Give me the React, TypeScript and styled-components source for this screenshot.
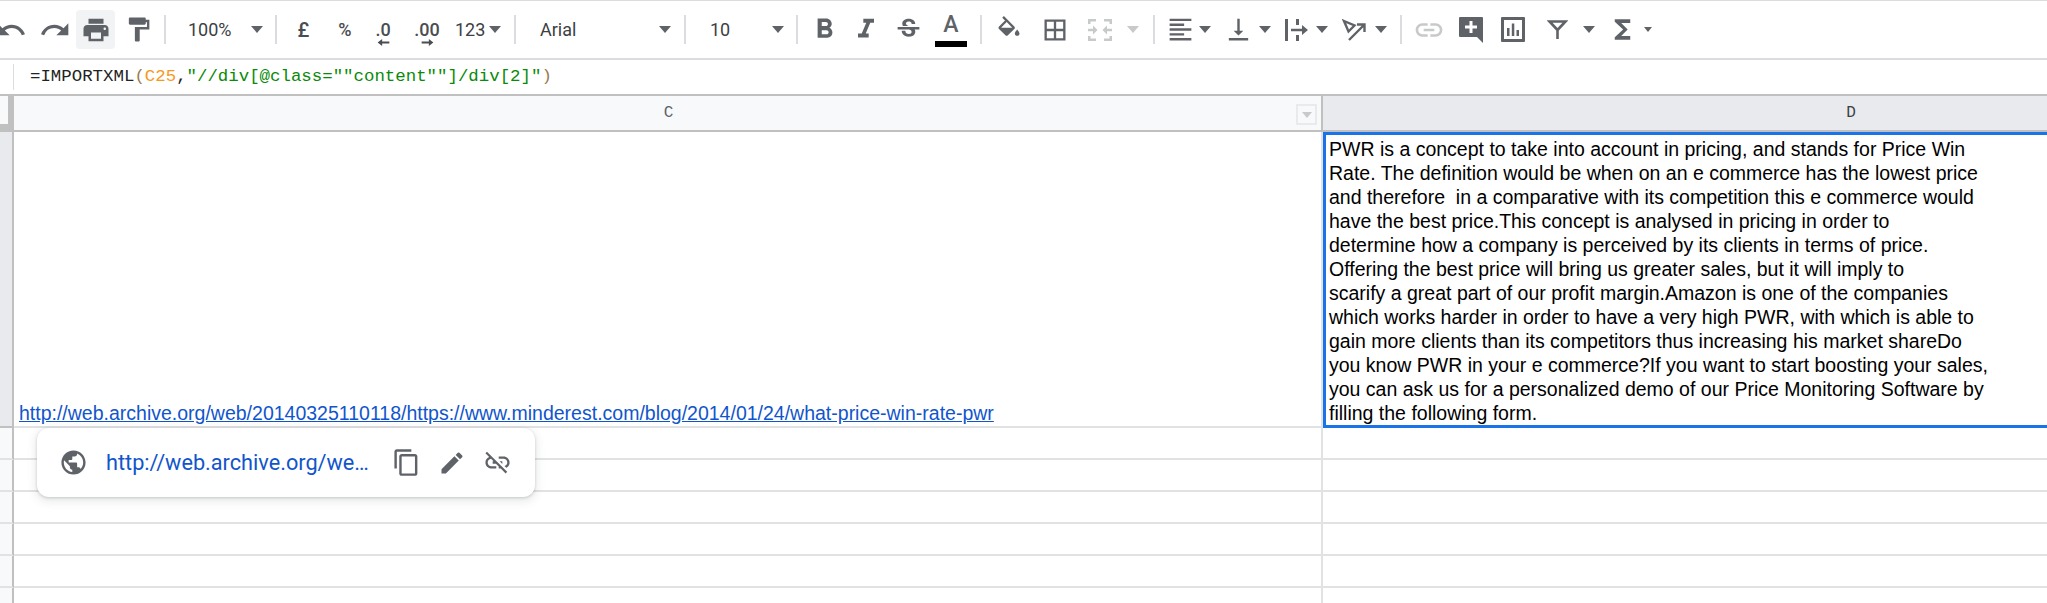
import React from "react"
import styled, { createGlobalStyle } from "styled-components"
import {
  MdUndo,
  MdRedo,
  MdPrint,
  MdFormatPaint,
  MdFormatBold,
  MdFormatItalic,
  MdStrikethroughS,
  MdBorderAll,
  MdFormatAlignLeft,
  MdVerticalAlignBottom,
  MdLink,
  MdFunctions,
  MdPublic,
  MdContentCopy,
  MdEdit,
  MdLinkOff,
} from "react-icons/md"

const iconColor = "#5f6368"
const gridLine = "#e1e2e3"
const frozenLine = "#c0c0c0"

const GlobalStyle = createGlobalStyle`
  html, body {
    margin: 0;
    padding: 0;
    height: 603px;
    overflow: hidden;
    background: #fff;
    font-family: "Liberation Sans", Arial, sans-serif;
  }
`

const Page = styled.div`
  position: relative;
  width: 2047px;
  height: 603px;
  overflow: hidden;
`

const Toolbar = styled.div`
  box-sizing: border-box;
  display: flex;
  align-items: center;
  height: 60px;
  width: 2058px;
  margin-left: -11px;
  border-top: 1px solid #dadce0;
  border-bottom: 2px solid #dadce0;
  color: ${iconColor};
`

const Slot = styled.div<{ $w: number; $ml?: number; $hover?: boolean; $muted?: boolean }>`
  flex: none;
  display: flex;
  align-items: center;
  justify-content: center;
  width: ${(p) => p.$w}px;
  height: 39px;
  margin-left: ${(p) => p.$ml ?? 0}px;
  border-radius: 4px;
  background: ${(p) => (p.$hover ? "#f1f3f4" : "transparent")};
  color: ${(p) => (p.$muted ? "#c8c9ca" : iconColor)};
`

const Sep = styled.div<{ $ml?: number }>`
  flex: none;
  width: 2px;
  height: 29px;
  margin-left: ${(p) => p.$ml ?? 0}px;
  background: #dadce0;
`

const Caret = styled.span<{ $size?: number; $muted?: boolean }>`
  display: block;
  width: 0;
  height: 0;
  border-left: ${(p) => p.$size ?? 6}px solid transparent;
  border-right: ${(p) => p.$size ?? 6}px solid transparent;
  border-top: ${(p) => (p.$size ?? 6) + 1}px solid ${(p) => (p.$muted ? "#c8c9ca" : iconColor)};
`

const Select = styled.div<{ $w: number; $pl: number; $pr: number }>`
  flex: none;
  box-sizing: border-box;
  display: flex;
  align-items: center;
  justify-content: space-between;
  width: ${(p) => p.$w}px;
  padding: 0 ${(p) => p.$pr}px 0 ${(p) => p.$pl}px;
  font: 400 18px Roboto, sans-serif;
  color: #3c4043;
`

const TextButton = styled(Slot)<{ $fs: number }>`
  font: 500 ${(p) => p.$fs}px Roboto, sans-serif;
  color: #4a4d51;
`

const DecimalButton = styled(Slot)`
  flex-direction: column;
  font: 500 18px/18px Roboto, sans-serif;
  color: #4a4d51;
  svg {
    margin: -1px 0 -8px;
  }
`

const ColorButton = styled(Slot)`
  flex-direction: column;
  justify-content: flex-start;
  font: 500 23px/26px Roboto, sans-serif;
  padding-top: 2px;
  box-sizing: border-box;
`

const ColorBar = styled.div`
  width: 32px;
  height: 6px;
  margin-top: 3px;
  background: #000;
`

const FormulaBar = styled.div`
  box-sizing: border-box;
  display: flex;
  align-items: center;
  height: 36px;
  padding-left: 13px;
  border-bottom: 2px solid ${frozenLine};
`

const FormulaDivider = styled.div`
  width: 1px;
  height: 26px;
  background: #dadce0;
`

const FormulaText = styled.div`
  margin-left: 16px;
  margin-top: -2px;
  font: 400 17.4px "Liberation Mono", monospace;
  color: #222;
  white-space: pre;
`

const Token = styled.span<{ $kind: "ref" | "str" | "paren" }>`
  color: ${(p) => (p.$kind === "ref" ? "#f7981d" : p.$kind === "str" ? "#0a8a0a" : "#9a7b4f")};
`

const Row = styled.div<{ $h: number }>`
  display: grid;
  grid-template-columns: 14px 1309px 1056px;
  height: ${(p) => p.$h}px;
`

const Corner = styled.div`
  box-sizing: border-box;
  background: #f8f9fa;
  border-right: 6px solid ${frozenLine};
  border-bottom: 8px solid ${frozenLine};
`

const ColHead = styled.div<{ $active?: boolean }>`
  box-sizing: border-box;
  position: relative;
  display: flex;
  align-items: center;
  justify-content: center;
  padding-left: 2px;
  background: ${(p) => (p.$active ? "#e8eaed" : "#f8f9fa")};
  border-right: 2px solid ${frozenLine};
  border-bottom: 2px solid ${frozenLine};
  font: 400 16px "Liberation Mono", monospace;
  color: ${(p) => (p.$active ? "#3c4043" : "#5f6368")};
`

const FilterToggle = styled.div`
  box-sizing: border-box;
  position: absolute;
  top: 8px;
  right: 4px;
  display: flex;
  align-items: center;
  justify-content: center;
  width: 21px;
  height: 21px;
  border: 2px solid #e8eaed;
  background: #f8f9fa;
`

const RowHead = styled.div<{ $active?: boolean }>`
  box-sizing: border-box;
  background: ${(p) => (p.$active ? "#e8eaed" : "#f8f9fa")};
  border-right: 2px solid ${frozenLine};
  border-bottom: 2px solid ${(p) => (p.$active ? frozenLine : gridLine)};
`

const Cell = styled.div`
  box-sizing: border-box;
  display: flex;
  flex-direction: column;
  justify-content: flex-end;
  padding: 0 5px 1px;
  border-right: 2px solid ${gridLine};
  border-bottom: 2px solid ${gridLine};
  font-size: 19.5px;
  line-height: 24px;
  color: #000;
`

const CellLink = styled.a`
  color: #1155cc;
  text-decoration: underline;
  white-space: nowrap;
`

const ActiveCell = styled.div`
  box-sizing: border-box;
  display: flex;
  flex-direction: column;
  justify-content: flex-end;
  padding: 0 3px;
  border: 3px solid #1a73e8;
  font-size: 19.5px;
  line-height: 24px;
  color: #000;
  white-space: pre;
`

const LinkPopup = styled.div`
  box-sizing: border-box;
  position: absolute;
  left: 37px;
  top: 428px;
  display: flex;
  align-items: center;
  width: 498px;
  height: 69px;
  padding-left: 22px;
  background: #fff;
  border-radius: 12px;
  box-shadow: 0 1px 3px rgba(60, 64, 67, 0.22), 0 3px 8px 2px rgba(60, 64, 67, 0.1);
  color: ${iconColor};
`

const PopupUrl = styled.span`
  width: 265px;
  margin: 0 21px 0 18px;
  white-space: nowrap;
  font: 400 21.7px Roboto, sans-serif;
  color: #1155cc;
`

const PopupAction = styled.div`
  display: flex;
  margin-right: 17px;
`

// toolbar glyphs that the icon packs don't have in this shape
const FillIcon = () => (
  <svg width="28" height="28" viewBox="0 0 24 24" fill="currentColor">
    <path d="M16.56 8.94 7.62 0 6.21 1.41l2.38 2.38-5.15 5.15c-.59.59-.59 1.54 0 2.12l5.5 5.5c.29.29.68.44 1.06.44s.77-.15 1.06-.44l5.5-5.5c.59-.58.59-1.53 0-2.12zM5.21 10 10 5.21 14.79 10H5.21zM19 11.5s-2 2.17-2 3.5c0 1.1.9 2 2 2s2-.9 2-2c0-1.33-2-3.5-2-3.5z" />
  </svg>
)

const MergeIcon = () => (
  <svg width="24" height="22" viewBox="0 0 24 22" fill="currentColor">
    <path d="M0 0h8v2.500H2.500V5H0zM16 0h8v5h-2.500V2.500H16zM0 17h2.500v2.500H8V22H0zM21.500 17H24v5h-8v-2.500h5.500zM0 9.700h5V6.500l4.500 4.500L5 15.500v-3.200H0zM24 9.700h-5V6.500L14.500 11l4.500 4.500v-3.200h5z" />
  </svg>
)

const WrapIcon = () => (
  <svg width="24" height="22" viewBox="0 0 24 22" fill="currentColor">
    <path d="M0 0h3v22H0zM11 0h3v6h-3zM11 16h3v6h-3zM6 9.700h11V6l6 5-6 5v-3.700H6z" />
  </svg>
)

const RotateIcon = () => (
  <svg width="24" height="22" viewBox="0 0 24 22" fill="none" stroke="currentColor" strokeWidth="2.4">
    <path d="M2 2l10.500 4.500L6.500 12.500zM7 21L22 6M15 5.500h7.500V13" />
  </svg>
)

const CommentIcon = () => (
  <svg width="24" height="26" viewBox="0 0 24 26" fill="currentColor">
    <path
      fillRule="evenodd"
      d="M1 0h22a1 1 0 0 1 1 1v25l-6-6H1a1 1 0 0 1-1-1V1a1 1 0 0 1 1-1zM10.500 4v4.500H6v3h4.500V16h3v-4.500H18v-3h-4.500V4z"
    />
  </svg>
)

const ChartIcon = () => (
  <svg width="24" height="25" viewBox="0 0 24 25" fill="currentColor">
    <path
      fillRule="evenodd"
      d="M1 0h22a1 1 0 0 1 1 1v23a1 1 0 0 1-1 1H1a1 1 0 0 1-1-1V1a1 1 0 0 1 1-1zM3 3v19h18V3zM6 11h2.500v8H6zM10.800 6.500h2.500V19h-2.500zM15.500 13H18v6h-2.500z"
    />
  </svg>
)

const FilterIcon = () => (
  <svg width="21" height="19" viewBox="0 0 21 19" fill="none" stroke="currentColor" strokeWidth="2.600">
    <path d="M2.500 1.500h16L10.500 10zM10.500 9v10" />
  </svg>
)

const ArrowIcon = ({ dir }: { dir: "left" | "right" }) => (
  <svg width="13" height="9" viewBox="0 0 13 10" fill="currentColor">
    <path d={dir === "left" ? "M13 3.800H5V1L0 5l5 4V6.200h8z" : "M0 3.800h8V1l5 4-5 4V6.200H0z"} />
  </svg>
)

const paragraph = [
  "PWR is a concept to take into account in pricing, and stands for Price Win",
  "Rate. The definition would be when on an e commerce has the lowest price",
  "and therefore  in a comparative with its competition this e commerce would",
  "have the best price.This concept is analysed in pricing in order to",
  "determine how a company is perceived by its clients in terms of price.",
  "Offering the best price will bring us greater sales, but it will imply to",
  "scarify a great part of our profit margin.Amazon is one of the companies",
  "which works harder in order to have a very high PWR, with which is able to",
  "gain more clients than its competitors thus increasing his market shareDo",
  "you know PWR in your e commerce?If you want to start boosting your sales,",
  "you can ask us for a personalized demo of our Price Monitoring Software by",
  "filling the following form.",
]

const linkUrl =
  "http://web.archive.org/web/20140325110118/https://www.minderest.com/blog/2014/01/24/what-price-win-rate-pwr"

const emptyRows = [1, 2, 3, 4, 5, 6]

const App = () => (
  <Page>
    <GlobalStyle />
    <Toolbar>
      <Slot $w={44}><MdUndo size={32} /></Slot>
      <Slot $w={43}><MdRedo size={32} /></Slot>
      <Slot $w={39} $hover><MdPrint size={30} /></Slot>
      <Slot $w={46}><MdFormatPaint size={29} /></Slot>
      <Sep $ml={3} />
      <Select $w={109} $pl={22} $pr={12}>100%<Caret /></Select>
      <Sep />
      <TextButton $w={53} $fs={20}>£</TextButton>
      <TextButton $w={30} $fs={18}>%</TextButton>
      <DecimalButton $w={46}>.0<ArrowIcon dir="left" /></DecimalButton>
      <DecimalButton $w={42}>.00<ArrowIcon dir="right" /></DecimalButton>
      <Select $w={66} $pl={7} $pr={13}>123<Caret /></Select>
      <Sep />
      <Select $w={168} $pl={24} $pr={13}>Arial<Caret /></Select>
      <Sep />
      <Select $w={110} $pl={24} $pr={12}>10<Caret /></Select>
      <Sep />
      <Slot $w={52}><MdFormatBold size={33} /></Slot>
      <Slot $w={32}><MdFormatItalic size={33} /></Slot>
      <Slot $w={52}><MdStrikethroughS size={29} /></Slot>
      <ColorButton $w={34}>A<ColorBar /></ColorButton>
      <Sep $ml={12} />
      <Slot $w={54}><FillIcon /></Slot>
      <Slot $w={38}><MdBorderAll size={28} /></Slot>
      <Slot $w={52} $muted><MergeIcon /></Slot>
      <Slot $w={14}><Caret $muted /></Slot>
      <Sep $ml={13} />
      <Slot $w={36} $ml={7}><MdFormatAlignLeft size={29} /></Slot>
      <Slot $w={14}><Caret /></Slot>
      <Slot $w={40} $ml={6}><MdVerticalAlignBottom size={29} /></Slot>
      <Slot $w={14}><Caret /></Slot>
      <Slot $w={36} $ml={7}><WrapIcon /></Slot>
      <Slot $w={14}><Caret /></Slot>
      <Slot $w={40} $ml={5}><RotateIcon /></Slot>
      <Slot $w={14}><Caret /></Slot>
      <Sep $ml={12} />
      <Slot $w={54} $muted><MdLink size={32} /></Slot>
      <Slot $w={30}><CommentIcon /></Slot>
      <Slot $w={54}><ChartIcon /></Slot>
      <Slot $w={34}><FilterIcon /></Slot>
      <Slot $w={14} $ml={8}><Caret /></Slot>
      <Slot $w={38} $ml={7}><MdFunctions size={31} /></Slot>
      <Slot $w={14}><Caret $size={4} /></Slot>
    </Toolbar>

    <FormulaBar>
      <FormulaDivider />
      <FormulaText>
        =IMPORTXML<Token $kind="paren">(</Token><Token $kind="ref">C25</Token>,
        <Token $kind="str">{'"//div[@class=""content""]/div[2]"'}</Token>
        <Token $kind="paren">)</Token>
      </FormulaText>
    </FormulaBar>

    <Row $h={36}>
      <Corner />
      <ColHead>
        C
        <FilterToggle><Caret $size={5} $muted /></FilterToggle>
      </ColHead>
      <ColHead $active>D</ColHead>
    </Row>

    <Row $h={296}>
      <RowHead $active />
      <Cell><CellLink href="#">{linkUrl}</CellLink></Cell>
      <ActiveCell>
        {paragraph.map((line) => (
          <div key={line}>{line}</div>
        ))}
      </ActiveCell>
    </Row>

    {emptyRows.map((n) => (
      <Row $h={32} key={n}>
        <RowHead />
        <Cell />
        <Cell />
      </Row>
    ))}

    <LinkPopup>
      <MdPublic size={29} />
      <PopupUrl>http://web.archive.org/we…</PopupUrl>
      <PopupAction><MdContentCopy size={29} /></PopupAction>
      <PopupAction><MdEdit size={28} /></PopupAction>
      <PopupAction><MdLinkOff size={29} /></PopupAction>
    </LinkPopup>
  </Page>
)

export default App
